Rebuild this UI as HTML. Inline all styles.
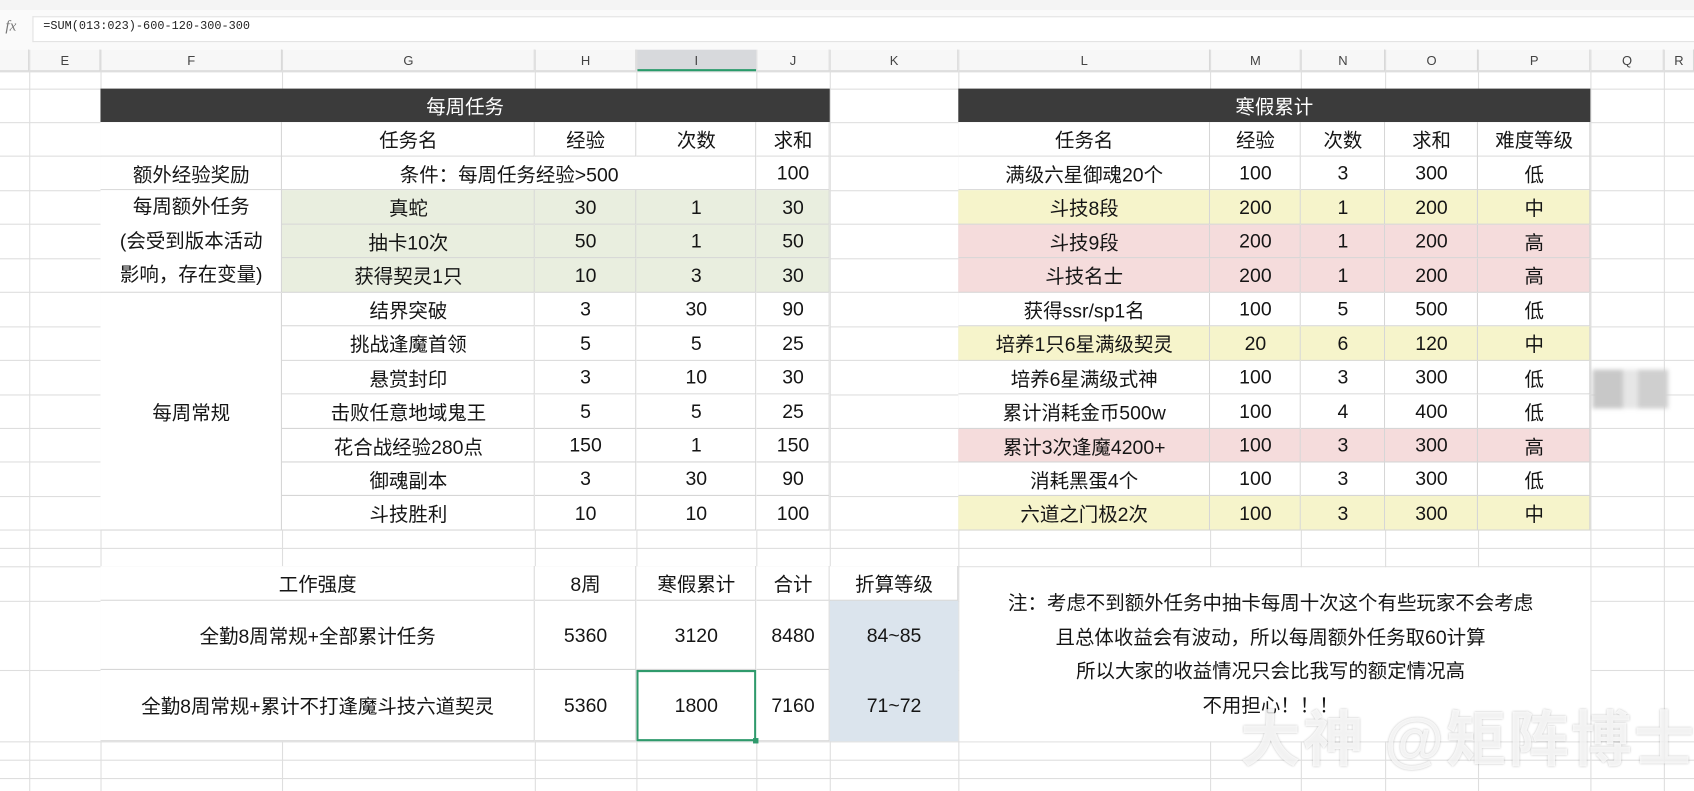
<!DOCTYPE html>
<html><head><meta charset="utf-8"><style>
html,body{margin:0;padding:0;background:#fff;overflow:hidden;width:1694px;height:791px}
#w{position:absolute;left:0;top:0;width:1568px;height:732px;transform:scale(1.0804,1.0806);transform-origin:0 0;font-family:"Liberation Sans","Noto Sans CJK SC",sans-serif;color:#151515;background:#fff}
.vl{position:absolute;top:46px;width:1px;height:686px;background:#dedede}
.hl{position:absolute;left:0;width:1568px;height:1px;background:#dedede}
.r{position:absolute;left:0;width:1568px}
.c{position:absolute;top:0;height:100%;display:flex;align-items:center;justify-content:center;text-align:center;background:#fff;box-shadow:inset -1px -1px 0 #d6d6d6;font-size:18px;white-space:nowrap}
.F{left:93px;width:168px}.G{left:261px;width:234px}.H{left:495px;width:94px}.I{left:589px;width:111px}.J{left:700px;width:68px}.K{left:768px;width:119px}
.L{left:887px;width:233px}.M{left:1120px;width:84px}.N{left:1204px;width:78px}.O{left:1282px;width:86px}.P{left:1368px;width:104px}
.g{background:#e9eedf}.y{background:#f6f4cb}.p{background:#f5dcdc}.b{background:#dbe4ed}
.ch{position:absolute;top:46px;height:20px;font-size:12px;color:#444;display:flex;align-items:center;justify-content:center;background:#f7f7f7;box-shadow:inset -1px -1px 0 #d8d8d8}
.tb{position:absolute;top:82px;height:31px;background:#3b3b3b;color:#fff;font-size:18px;display:flex;align-items:center;justify-content:center}
</style></head><body><div id="w">
<div style="position:absolute;left:0;top:0;width:1568px;height:9px;background:#f4f4f4;border-bottom:1px solid #e6e6e6"></div>
<div style="position:absolute;left:0;top:9px;width:1568px;height:37px;background:#fafafa"></div>
<div style="position:absolute;left:5px;top:17px;font-family:'Liberation Serif',serif;font-style:italic;font-size:14px;color:#777">fx</div>
<div style="position:absolute;left:30px;top:15px;width:1538px;height:22px;background:#fff;border:1px solid #e2e2e2;border-right:none"></div>
<div style="position:absolute;left:40px;top:19px;font-family:'Liberation Mono',monospace;font-size:11px;color:#222">=SUM(013:023)-600-120-300-300</div>

<div class="ch" style="left:0;width:27px"></div>
<div class="ch" style="left:27px;width:66px">E</div><div class="ch" style="left:93px;width:168px">F</div><div class="ch" style="left:261px;width:234px">G</div><div class="ch" style="left:495px;width:94px">H</div>
<div class="ch" style="left:589px;width:111px;background:#d7d9dc;box-shadow:inset 0 -2px 0 #2a9b6b">I</div>
<div class="ch" style="left:700px;width:68px">J</div><div class="ch" style="left:768px;width:119px">K</div><div class="ch" style="left:887px;width:233px">L</div><div class="ch" style="left:1120px;width:84px">M</div><div class="ch" style="left:1204px;width:78px">N</div><div class="ch" style="left:1282px;width:86px">O</div><div class="ch" style="left:1368px;width:104px">P</div><div class="ch" style="left:1472px;width:68px">Q</div><div class="ch" style="left:1540px;width:28px">R</div>

<div class="vl" style="left:27px"></div><div class="vl" style="left:93px"></div><div class="vl" style="left:261px"></div><div class="vl" style="left:495px"></div><div class="vl" style="left:589px"></div><div class="vl" style="left:700px"></div><div class="vl" style="left:768px"></div><div class="vl" style="left:887px"></div><div class="vl" style="left:1120px"></div><div class="vl" style="left:1204px"></div><div class="vl" style="left:1282px"></div><div class="vl" style="left:1368px"></div><div class="vl" style="left:1472px"></div><div class="vl" style="left:1540px"></div>
<div class="hl" style="top:66px"></div><div class="hl" style="top:82px"></div><div class="hl" style="top:490px"></div><div class="hl" style="top:507px"></div><div class="hl" style="top:524px"></div><div class="hl" style="top:556px"></div><div class="hl" style="top:620px"></div><div class="hl" style="top:686px"></div><div class="hl" style="top:703px"></div><div class="hl" style="top:720px"></div>
<div class="hl" style="top:144px"></div><div class="hl" style="top:176px"></div><div class="hl" style="top:207px"></div><div class="hl" style="top:239px"></div><div class="hl" style="top:270px"></div><div class="hl" style="top:302px"></div><div class="hl" style="top:333px"></div><div class="hl" style="top:365px"></div><div class="hl" style="top:396px"></div><div class="hl" style="top:427px"></div><div class="hl" style="top:459px"></div><div class="hl" style="top:113px"></div>

<div class="tb" style="left:93px;width:675px">每周任务</div>
<div class="tb" style="left:887px;width:585px">寒假累计</div>

<div class="r" style="top:113px;height:32px"><div class="c F"></div><div class="c G">任务名</div><div class="c H">经验</div><div class="c I">次数</div><div class="c J">求和</div>
<div class="c L">任务名</div><div class="c M">经验</div><div class="c N">次数</div><div class="c O">求和</div><div class="c P">难度等级</div></div>
<div class="r" style="top:145px;height:31px"><div class="c F">额外经验奖励</div><div class="c" style="left:261px;width:439px;justify-content:flex-start;padding-left:109px;box-sizing:border-box">条件：每周任务经验&gt;500</div><div class="c J">100</div>
<div class="c L">满级六星御魂20个</div><div class="c M">100</div><div class="c N">3</div><div class="c O">300</div><div class="c P">低</div></div>
<div class="r" style="top:176px;height:32px"><div class="c G g">真蛇</div><div class="c H g">30</div><div class="c I g">1</div><div class="c J g">30</div>
<div class="c L y">斗技8段</div><div class="c M y">200</div><div class="c N y">1</div><div class="c O y">200</div><div class="c P y">中</div></div>
<div class="r" style="top:208px;height:31px"><div class="c G g">抽卡10次</div><div class="c H g">50</div><div class="c I g">1</div><div class="c J g">50</div>
<div class="c L p">斗技9段</div><div class="c M p">200</div><div class="c N p">1</div><div class="c O p">200</div><div class="c P p">高</div></div>
<div class="r" style="top:239px;height:32px"><div class="c G g">获得契灵1只</div><div class="c H g">10</div><div class="c I g">3</div><div class="c J g">30</div>
<div class="c L p">斗技名士</div><div class="c M p">200</div><div class="c N p">1</div><div class="c O p">200</div><div class="c P p">高</div></div>
<div class="c F" style="top:176px;height:95px;line-height:31.5px">每周额外任务<br>(会受到版本活动<br>影响，存在变量)</div>
<div class="r" style="top:271px;height:31px"><div class="c G">结界突破</div><div class="c H">3</div><div class="c I">30</div><div class="c J">90</div>
<div class="c L">获得ssr/sp1名</div><div class="c M">100</div><div class="c N">5</div><div class="c O">500</div><div class="c P">低</div></div>
<div class="r" style="top:302px;height:32px"><div class="c G">挑战逢魔首领</div><div class="c H">5</div><div class="c I">5</div><div class="c J">25</div>
<div class="c L y">培养1只6星满级契灵</div><div class="c M y">20</div><div class="c N y">6</div><div class="c O y">120</div><div class="c P y">中</div></div>
<div class="r" style="top:334px;height:31px"><div class="c G">悬赏封印</div><div class="c H">3</div><div class="c I">10</div><div class="c J">30</div>
<div class="c L">培养6星满级式神</div><div class="c M">100</div><div class="c N">3</div><div class="c O">300</div><div class="c P">低</div></div>
<div class="r" style="top:365px;height:32px"><div class="c G">击败任意地域鬼王</div><div class="c H">5</div><div class="c I">5</div><div class="c J">25</div>
<div class="c L">累计消耗金币500w</div><div class="c M">100</div><div class="c N">4</div><div class="c O">400</div><div class="c P">低</div></div>
<div class="r" style="top:397px;height:31px"><div class="c G">花合战经验280点</div><div class="c H">150</div><div class="c I">1</div><div class="c J">150</div>
<div class="c L p">累计3次逢魔4200+</div><div class="c M p">100</div><div class="c N p">3</div><div class="c O p">300</div><div class="c P p">高</div></div>
<div class="r" style="top:428px;height:31px"><div class="c G">御魂副本</div><div class="c H">3</div><div class="c I">30</div><div class="c J">90</div>
<div class="c L">消耗黑蛋4个</div><div class="c M">100</div><div class="c N">3</div><div class="c O">300</div><div class="c P">低</div></div>
<div class="r" style="top:459px;height:32px"><div class="c G">斗技胜利</div><div class="c H">10</div><div class="c I">10</div><div class="c J">100</div>
<div class="c L y">六道之门极2次</div><div class="c M y">100</div><div class="c N y">3</div><div class="c O y">300</div><div class="c P y">中</div></div>
<div class="c F" style="top:271px;height:220px">每周常规</div>

<div class="r" style="top:524px;height:32px"><div class="c" style="left:93px;width:402px">工作强度</div><div class="c H">8周</div><div class="c I">寒假累计</div><div class="c J">合计</div><div class="c K">折算等级</div></div>
<div class="r" style="top:556px;height:64px"><div class="c" style="left:93px;width:402px">全勤8周常规+全部累计任务</div><div class="c H">5360</div><div class="c I">3120</div><div class="c J">8480</div><div class="c K b" style="box-shadow:none">84~85</div></div>
<div class="r" style="top:620px;height:66px"><div class="c" style="left:93px;width:402px">全勤8周常规+累计不打逢魔斗技六道契灵</div><div class="c H">5360</div><div class="c I" style="box-shadow:inset 0 0 0 2px #2f9a6c">1800</div><div class="c J">7160</div><div class="c K b" style="box-shadow:none">71~72</div></div>
<div style="position:absolute;left:697px;top:683px;width:5px;height:5px;background:#2f9a6c"></div>
<div style="position:absolute;left:888px;top:525px;width:584px;height:161px;background:#fff;font-size:18px;text-align:center;line-height:31.5px;padding-top:18px;box-sizing:border-box;padding-right:8px">注：考虑不到额外任务中抽卡每周十次这个有些玩家不会考虑<br>且总体收益会有波动，所以每周额外任务取60计算<br>所以大家的收益情况只会比我写的额定情况高<br>不用担心！！！</div>
<div style="position:absolute;left:1474px;top:342px;width:70px;height:36px;background:linear-gradient(90deg,#c8c8c8 0,#c8c8c8 40%,#e6e6e6 40%,#e6e6e6 60%,#cfcfcf 60%);filter:blur(2px)"></div>
<div style="position:absolute;left:1148px;top:640px;font-size:56px;font-weight:bold;color:rgba(255,255,255,0.8);text-shadow:0 0 2px rgba(0,0,0,0.25);white-space:nowrap;letter-spacing:2px">大神 @矩阵博士</div>
</div></body></html>
